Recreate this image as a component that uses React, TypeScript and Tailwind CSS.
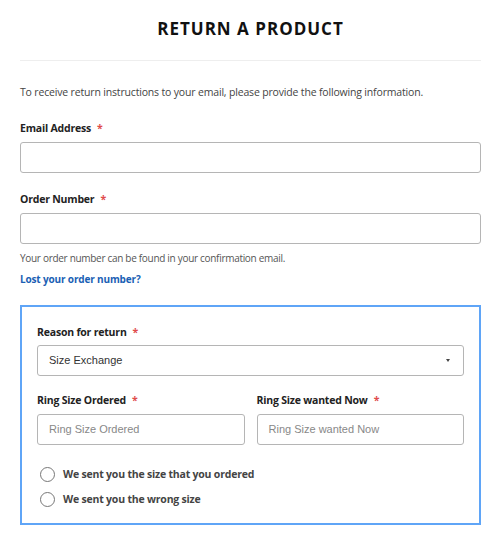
function Label({ text }: { text: string }) {
  return (
    <div className="text-[10.5px] font-bold tracking-[-0.2px] text-[#222] leading-[14px]">
      {text}
      <span className="text-[#e04b4b] ml-1.5">*</span>
    </div>
  )
}

function Radio({ text }: { text: string }) {
  return (
    <label className="flex items-center gap-2">
      <span className="w-[15px] h-[15px] rounded-full border border-[#777] bg-white" />
      <span className="text-[10.5px] font-bold tracking-[-0.2px] text-[#444] leading-[18px]">{text}</span>
    </label>
  )
}

export default function App() {
  return (
    <div className="w-[501px] h-[541px] bg-white px-5 font-['Open_Sans',sans-serif]">
      <h1 className="text-center text-[17px] font-bold tracking-[1px] text-[#111] pt-[17px] pb-[19px] leading-6">
        RETURN A PRODUCT
      </h1>
      <div className="border-t border-[#eeeeee]" />

      <p className="text-[10.5px] tracking-[-0.17px] text-[#444] mt-[23px] leading-4">
        To receive return instructions to your email, please provide the following information.
      </p>

      <div className="mt-[21px]">
        <Label text="Email Address" />
        <div className="mt-[7px] h-[31px] border border-[#b5b5b5] rounded-[3px]" />
      </div>

      <div className="mt-[19px]">
        <Label text="Order Number" />
        <div className="mt-[7px] h-[31px] border border-[#b5b5b5] rounded-[3px]" />
        <p className="text-[10px] tracking-[-0.3px] text-[#555] mt-[6px] leading-4">
          Your order number can be found in your confirmation email.
        </p>
        <a className="block text-[10px] font-bold tracking-[-0.15px] text-[#1a5fb4] mt-[5px] leading-4">
          Lost your order number?
        </a>
      </div>

      <div className="mt-[18px] border-2 border-[#5fa5f7] px-[15px] pt-[18px] pb-[15px]">
        <Label text="Reason for return" />
        <div className="mt-[6px] h-[31px] border border-[#b5b5b5] rounded-[3px] flex items-center justify-between pl-[11px] pr-[13px]">
          <span className="text-[11px] text-[#333] font-['Liberation_Sans',sans-serif]">Size Exchange</span>
          <span className="w-0 h-0 border-l-[2.5px] border-r-[2.5px] border-t-[3px] border-l-transparent border-r-transparent border-t-[#444]" />
        </div>

        <div className="grid grid-cols-2 gap-3 mt-[17px]">
          <div>
            <Label text="Ring Size Ordered" />
            <div className="mt-[7px] h-[31px] border border-[#b5b5b5] rounded-[3px] flex items-center pl-[11px]">
              <span className="text-[11px] text-[#888] font-['Liberation_Sans',sans-serif]">Ring Size Ordered</span>
            </div>
          </div>
          <div>
            <Label text="Ring Size wanted Now" />
            <div className="mt-[7px] h-[31px] border border-[#b5b5b5] rounded-[3px] flex items-center pl-[11px]">
              <span className="text-[11px] text-[#888] font-['Liberation_Sans',sans-serif]">Ring Size wanted Now</span>
            </div>
          </div>
        </div>

        <div className="flex flex-col gap-[7px] mt-[20px] pl-[3px]">
          <Radio text="We sent you the size that you ordered" />
          <Radio text="We sent you the wrong size" />
        </div>
      </div>
    </div>
  )
}
